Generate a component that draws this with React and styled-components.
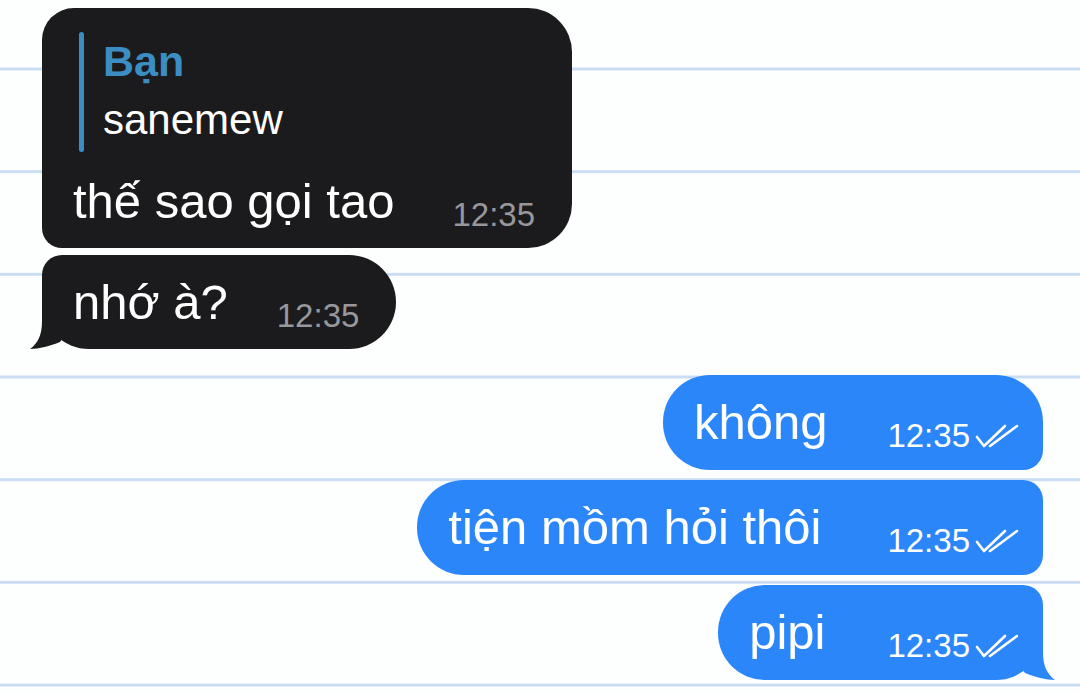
import React from "react";
import styled, { createGlobalStyle } from "styled-components";

const Global = createGlobalStyle`
  html, body { margin: 0; padding: 0; background: #fdfefe; }
  body { font-family: "Liberation Sans", Arial, sans-serif; }
`;

const Page = styled.div`
  width: 1080px;
  height: 693px;
  overflow: hidden;
  box-sizing: border-box;
  padding: 8px 37px 0 42px;
  display: flex;
  flex-direction: column;
  background-color: #fdfefe;
  background-image: linear-gradient(
    to bottom,
    transparent 0,
    transparent 99.4px,
    #dbe8f7 99.4px,
    #c6daf2 100.4px,
    #c6daf2 101.7px,
    #dbe8f7 102.7px
  );
  background-size: 100% 102.7px;
  background-position: 0 -32.2px;
`;

const Group = styled.div`
  display: flex;
  flex-direction: column;
  gap: ${(p) => p.$gap}px;
  margin-top: ${(p) => p.$top || 0}px;
`;

const Row = styled.div`
  display: flex;
  justify-content: ${(p) => (p.$out ? "flex-end" : "flex-start")};
`;

const Bubble = styled.div`
  position: relative;
  box-sizing: border-box;
  background: ${(p) => (p.$out ? "#2b87f9" : "#1b1b1d")};
  color: #ffffff;
  padding: ${(p) => (p.$out ? "18px 23px 19px 31px" : "18px 37px 18px 31px")};
  border-radius: ${(p) => p.$radius};
`;

const Reply = styled.div`
  display: flex;
  margin: 6px 0 20px 6px;
  gap: 19px;
`;

const ReplyBar = styled.div`
  width: 5px;
  border-radius: 3px;
  background: #3b8ec3;
`;

const ReplyBody = styled.div`
  display: flex;
  flex-direction: column;
  padding-bottom: 2px;
`;

const ReplyName = styled.div`
  font-size: 43px;
  font-weight: 700;
  line-height: 58px;
  color: #3b8ec3;
`;

const ReplyText = styled.div`
  font-size: 42px;
  line-height: 60px;
  color: #ffffff;
`;

const Line = styled.div`
  font-size: 49px;
  line-height: 58px;
  white-space: nowrap;
`;

const Meta = styled.span`
  display: inline-flex;
  align-items: baseline;
  margin-left: ${(p) => p.$gap}px;
  font-size: 33px;
  line-height: 28px;
  vertical-align: -8px;
  color: ${(p) => (p.$out ? "#ffffff" : "#97979c")};
`;

const Checks = styled.svg`
  margin-left: 4px;
  width: 46px;
  height: 25px;
  display: block;
  flex: none;
  align-self: flex-end;
  margin-bottom: 1px;
`;

const Tail = styled.svg`
  position: absolute;
  bottom: 0;
  width: 44px;
  height: 46px;
  ${(p) => (p.$out ? "right: -12px; transform: scaleX(-1);" : "left: -12px;")}
`;

const TailShape = ({ out, color }) => (
  <Tail $out={out} viewBox="0 0 44 46">
    <path
      d="M12 0 L12 18 C12 32 8 40 0 46 C9 46 20 43 30 39 L37 30 L37 0 Z"
      fill={color}
    />
  </Tail>
);

const DoubleCheck = () => (
  <Checks viewBox="0 0 46 25">
    <g fill="none" stroke="#ffffff" strokeWidth="2.6" strokeLinecap="round" strokeLinejoin="round">
      <path d="M3 13 L10 22 L31 2" />
      <path d="M16 22 L43 2" />
    </g>
  </Checks>
);

const Message = ({ text, out, radius, tail, gap, reply }) => (
  <Row $out={out}>
    <Bubble $out={out} $radius={radius}>
      {reply && (
        <Reply>
          <ReplyBar />
          <ReplyBody>
            <ReplyName>{reply.name}</ReplyName>
            <ReplyText>{reply.text}</ReplyText>
          </ReplyBody>
        </Reply>
      )}
      <Line>
        <span>{text}</span>
        <Meta $out={out} $gap={gap}>
          12:35
          {out && <DoubleCheck />}
        </Meta>
      </Line>
      {tail && <TailShape out={out} color={out ? "#2b87f9" : "#1b1b1d"} />}
    </Bubble>
  </Row>
);

export default function App() {
  return (
    <>
      <Global />
      <Page>
        <Group $gap={7}>
          <Message
            text="thế sao gọi tao"
            reply={{ name: "Bạn", text: "sanemew" }}
            radius="32px 44px 44px 20px"
            gap={58}
          />
          <Message text="nhớ à?" radius="20px 47px 47px 47px" tail gap={49} />
        </Group>
        <Group $gap={10} $top={26}>
          <Message out text="không" radius="47px 47px 20px 47px" gap={60} />
          <Message out text="tiện mồm hỏi thôi" radius="47px 20px 20px 47px" gap={66} />
          <Message out text="pipi" radius="47px 20px 47px 47px" tail gap={62} />
        </Group>
      </Page>
    </>
  );
}
